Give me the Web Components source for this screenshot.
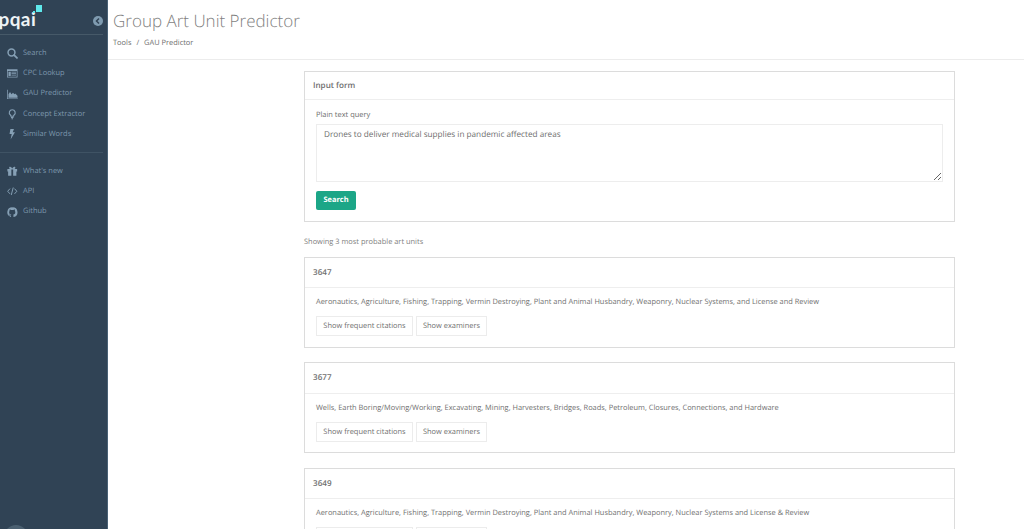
<!DOCTYPE html>
<html>
<head>
<meta charset="utf-8">
<title>Group Art Unit Predictor</title>
<style>
  html, body { margin: 0; height: 100%; overflow: hidden; background: #fff; }
  body { font-family: "Open Sans", sans-serif; display: flex; height: 529px; text-rendering: geometricPrecision; }
</style>
</head>
<body>
<side-bar>
  <side-link label="Search" icon="search"></side-link>
  <side-link label="CPC Lookup" icon="table"></side-link>
  <side-link label="GAU Predictor" icon="chart"></side-link>
  <side-link label="Concept Extractor" icon="bulb"></side-link>
  <side-link label="Similar Words" icon="bolt"></side-link>
  <side-link slot="more" label="What's new" icon="gift"></side-link>
  <side-link slot="more" label="API" icon="code"></side-link>
  <side-link slot="more" label="Github" icon="github"></side-link>
</side-bar>
<main-area>
  <page-head title-text="Group Art Unit Predictor"></page-head>
  <input-form></input-form>
  <result-note>Showing 3 most probable art units</result-note>
  <unit-card unit="3647">Aeronautics, Agriculture, Fishing, Trapping, Vermin Destroying, Plant and Animal Husbandry, Weaponry, Nuclear Systems, and License and Review</unit-card>
  <unit-card unit="3677">Wells, Earth Boring/Moving/Working, Excavating, Mining, Harvesters, Bridges, Roads, Petroleum, Closures, Connections, and Hardware</unit-card>
  <unit-card unit="3649">Aeronautics, Agriculture, Fishing, Trapping, Vermin Destroying, Plant and Animal Husbandry, Weaponry, Nuclear Systems and License &amp; Review</unit-card>
</main-area>

<script>
const ICONS = {
  search: '<circle cx="6" cy="6" r="4.6" fill="none" stroke="currentColor" stroke-width="2"/><path d="M9.500 9.500 13.300 13.300" stroke="currentColor" stroke-width="2.400" stroke-linecap="round"/>',
  table: '<path fill-rule="evenodd" fill="currentColor" d="M0 1.500h14v11H0zM1 4v7.500h12V4zM2 5h3v5.500H2zM6 5h6v1H6zM6 7h6v1H6zM6 9h6v1H6z"/>',
  chart: '<path fill="currentColor" d="M0 1h1v11.500h13.500v1H0zM2 11.500V7l2-3 2 3 2-2 2 2 1-1 3 3v2.500z"/>',
  bulb: '<path fill="none" stroke="currentColor" stroke-width="1.500" d="M7 1a3.900 3.900 0 0 0-2.400 7c.5.5.7 1 .7 1.600h3.400c0-.6.2-1.100.7-1.600A3.900 3.900 0 0 0 7 1z"/><path stroke="currentColor" stroke-width="1.400" d="M5.300 11.200h3.400M6 13h2"/>',
  bolt: '<path fill="currentColor" d="M4.500 0h4.800L7.600 4.200h3L4.800 14l1.500-7.200H3.400z"/>',
  gift: '<path fill="currentColor" fill-rule="evenodd" d="M.5 4h3.700C3 3.500 2.600 2.500 3 1.700 3.500.8 5 .9 6 2l1 1.200L8 2c1-1.100 2.500-1.200 3-.3.4.8 0 1.800-1.200 2.300h3.700v3.200h-1V13h-11V7.200h-1zM5.800 4.500V13h2.400V4.500z"/>',
  code: '<path fill="none" stroke="currentColor" stroke-width="1.300" d="M4 3.500.9 7 4 10.500M10 3.500 13.100 7 10 10.500M8.300 2 5.700 12"/>',
  github: '<path fill="currentColor" d="M7 .5a6.500 6.500 0 0 0-2 12.700c.3 0 .4-.1.4-.3v-1.200c-1.800.4-2.200-.7-2.200-.7-.3-.7-.7-.9-.7-.9-.6-.4 0-.4 0-.4.6 0 1 .7 1 .7.600.9 1.500.7 1.900.5 0-.4.200-.7.400-.8-1.400-.2-3-.7-3-3.200 0-.7.300-1.300.6-1.700 0-.2-.3-.8.100-1.700 0 0 .5-.2 1.800.6a6 6 0 0 1 3.300 0c1.200-.8 1.800-.6 1.800-.6.300.9.100 1.500.1 1.700.4.400.6 1 .6 1.700 0 2.500-1.500 3-3 3.200.3.200.5.600.5 1.100v1.800c0 .2.100.3.400.3A6.500 6.500 0 0 0 7 .5z"/>'
};

class SideBar extends HTMLElement {
  constructor() {
    super();
    this.attachShadow({ mode: 'open' }).innerHTML = `
      <style>
        :host {
          display: block;
          position: relative;
          flex: 0 0 108px;
          box-sizing: border-box;
          height: 529px;
          overflow: hidden;
          background-color: #304355;
          background-image: radial-gradient(rgba(0,0,0,.07) .6px, transparent .7px);
          background-size: 2px 2px;
          border-right: 1px solid #4a6276;
        }
        .logo {
          display: flex;
          align-items: center;
          justify-content: flex-end;
          height: 34px;
          border-bottom: 1px solid #465968;
          margin-right: 4px;
          position: relative;
        }
        .word {
          position: absolute;
          left: -1.500px;
          top: 10px;
          color: #eef3f6;
          font: 700 19px/20px Lato, "Open Sans", sans-serif;
          letter-spacing: .4px;
        }
        .sq { position: absolute; left: 36px; top: 5px; width: 6px; height: 7px; background: #5fe9ec; }
        .dot { position: absolute; left: 33px; top: 11px; width: 2px; height: 2px; background: #5fe9ec; }
        .back { margin-top: 7px; }
        nav { padding-top: 8.300px; }
        nav + nav { margin-top: 7.300px; padding-top: 8px; border-top: 1px solid #3f5364; margin-right: 4px; }
        .avatar {
          position: absolute;
          left: 4px;
          top: 525px;
          width: 24px;
          height: 24px;
          border-radius: 50%;
          background: #4b6071;
        }
      </style>
      <div class="logo">
        <span class="word">pqai</span>
        <i class="sq"></i><i class="dot"></i>
        <svg class="back" width="10" height="10" viewBox="0 0 10 10">
          <circle cx="5" cy="5" r="5" fill="#7f9bb0"/>
          <path d="M6 2.500 3.500 5 6 7.500" fill="none" stroke="#304355" stroke-width="1.500"/>
        </svg>
      </div>
      <nav><slot></slot></nav>
      <nav><slot name="more"></slot></nav>
      <i class="avatar"></i>`;
  }
}

class SideLink extends HTMLElement {
  constructor() {
    super();
    const icon = ICONS[this.getAttribute('icon')] || '';
    this.attachShadow({ mode: 'open' }).innerHTML = `
      <style>
        :host {
          display: flex;
          align-items: center;
          height: 20.300px;
          padding-left: 7px;
          color: #7e98ad;
          font: 7.450px/1 "Open Sans", sans-serif;
          white-space: nowrap;
        }
        svg { width: 10.500px; height: 10.500px; flex: none; margin-right: 5.500px; color: #86a0b5; }
      </style>
      <svg viewBox="0 0 14 14">${icon}</svg><span>${this.getAttribute('label')}</span>`;
  }
}

class MainArea extends HTMLElement {
  constructor() {
    super();
    this.attachShadow({ mode: 'open' }).innerHTML = `
      <style>
        :host { display: block; flex: 1; min-width: 0; height: 529px; overflow: hidden; }
        .col { width: 651px; margin-left: 196px; padding-top: 11px; }
      </style>
      <slot name="head"></slot>
      <div class="col"><slot></slot></div>`;
    this.querySelector('page-head').slot = 'head';
  }
}

class PageHead extends HTMLElement {
  constructor() {
    super();
    this.attachShadow({ mode: 'open' }).innerHTML = `
      <style>
        :host {
          display: block;
          box-sizing: border-box;
          height: 60px;
          padding: 9px 0 0 5px;
          border-bottom: 1px solid #ececec;
        }
        h1 { margin: 0; font: 300 17px/24px "Open Sans", sans-serif; color: #7f7f7f; }
        .crumb { margin-top: 3.500px; font: 7.450px/12px "Open Sans", sans-serif; color: #6e6e6e; }
        .crumb i { font-style: normal; margin: 0 3px; }
      </style>
      <h1>${this.getAttribute('title-text')}</h1>
      <div class="crumb">Tools <i>/</i> GAU Predictor</div>`;
  }
}

class InputForm extends HTMLElement {
  constructor() {
    super();
    this.attachShadow({ mode: 'open' }).innerHTML = `
      <style>
        :host {
          display: block;
          box-sizing: border-box;
          height: 151px;
          border: 1px solid #dcdcdc;
          font-family: "Open Sans", sans-serif;
        }
        .title {
          height: 28px;
          box-sizing: border-box;
          padding-left: 8px;
          border-bottom: 1px solid #eeeeee;
          font: 600 8.100px/28px "Open Sans", sans-serif;
          color: #6e6e6e;
        }
        .body { padding: 9px 11px 0; }
        label { display: block; font: 7.450px/12px "Open Sans", sans-serif; color: #6e6e6e; margin-bottom: 3px; }
        textarea {
          display: block;
          box-sizing: border-box;
          width: 100%;
          height: 58px;
          margin: 0;
          padding: 4px 7px;
          border: 1px solid #ededed;
          border-radius: 0;
          outline: none;
          font: 8.200px/12px "Open Sans", sans-serif;
          text-rendering: geometricPrecision;
          color: #6e6e6e;
        }
        button {
          display: block;
          width: 40px;
          height: 19px;
          margin-top: 9px;
          padding: 0;
          border: 0;
          border-radius: 2px;
          background: #1ca687;
          color: #fff;
          font: 700 7.450px/19px "Open Sans", sans-serif;
          text-rendering: geometricPrecision;
        }
      </style>
      <div class="title">Input form</div>
      <div class="body">
        <label>Plain text query</label>
        <textarea>Drones to deliver medical supplies in pandemic affected areas</textarea>
        <button>Search</button>
      </div>`;
  }
}

class ResultNote extends HTMLElement {
  constructor() {
    super();
    this.attachShadow({ mode: 'open' }).innerHTML = `
      <style>
        :host { display: block; height: 34.600px; font: 7.450px/40.500px "Open Sans", sans-serif; color: #808080; }
      </style><slot></slot>`;
  }
}

class UnitCard extends HTMLElement {
  constructor() {
    super();
    this.attachShadow({ mode: 'open' }).innerHTML = `
      <style>
        :host {
          display: block;
          box-sizing: border-box;
          height: 91px;
          margin-bottom: 14.700px;
          border: 1px solid #dcdcdc;
          font-family: "Open Sans", sans-serif;
          color: #707070;
        }
        .title {
          height: 30.500px;
          box-sizing: border-box;
          padding-left: 8px;
          border-bottom: 1px solid #eeeeee;
          font: 600 8.100px/30.500px "Open Sans", sans-serif;
        }
        .body { padding: 0 11px; }
        p { margin: 0; font: 7.430px/28.500px "Open Sans", sans-serif; height: 28px; white-space: nowrap; }
        .btns { display: flex; gap: 3px; }
        .btns span {
          box-sizing: border-box;
          height: 20px;
          padding: 0;
          text-align: center;
          border: 1px solid #ececec;
          font: 7.450px/19px "Open Sans", sans-serif;
        }
        .btns span:first-child { width: 97px; }
        .btns span:last-child { width: 71px; }
      </style>
      <div class="title">${this.getAttribute('unit')}</div>
      <div class="body">
        <p><slot></slot></p>
        <div class="btns"><span>Show frequent citations</span><span>Show examiners</span></div>
      </div>`;
  }
}

customElements.define('side-bar', SideBar);
customElements.define('side-link', SideLink);
customElements.define('main-area', MainArea);
customElements.define('page-head', PageHead);
customElements.define('input-form', InputForm);
customElements.define('result-note', ResultNote);
customElements.define('unit-card', UnitCard);
</script>
</body>
</html>
